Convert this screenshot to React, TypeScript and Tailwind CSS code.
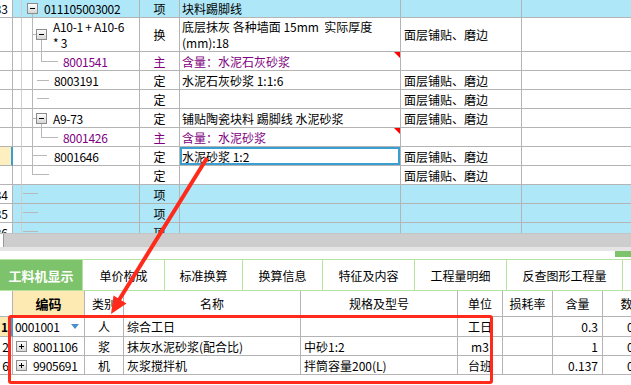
import React from 'react';

type TopRow = {
  h: number;
  num?: string;
  blue?: boolean;
  box?: boolean;
  pl?: number;
  code?: string[];
  purple?: boolean;
  type?: string;
  name?: string[];
  feat?: string;
  tri?: boolean;
  selected?: boolean;
};

const topRows: TopRow[] = [
  { h: 18, num: '33', blue: true, box: true, pl: 5, code: ['011105003002'], type: '项', name: ['块料踢脚线'] },
  { h: 34, box: true, pl: 14, code: ['A10-1 + A10-6', '* 3'], type: '换', name: ['底层抹灰 各种墙面 15mm  实际厚度', '(mm):18'], feat: '面层铺贴、磨边' },
  { h: 19, pl: 41, code: ['8001541'], purple: true, type: '主', name: ['含量：水泥石灰砂浆'], tri: true },
  { h: 19, pl: 32, code: ['8003191'], type: '定', name: ['水泥石灰砂浆 1:1:6'], feat: '面层铺贴、磨边' },
  { h: 19, type: '定', feat: '面层铺贴、磨边' },
  { h: 19, box: true, pl: 14, code: ['A9-73'], type: '定', name: ['铺贴陶瓷块料 踢脚线 水泥砂浆'], feat: '面层铺贴、磨边' },
  { h: 19, pl: 41, code: ['8001426'], purple: true, type: '主', name: ['含量：水泥砂浆'], tri: true },
  { h: 19, pl: 32, code: ['8001646'], type: '定', name: ['水泥砂浆 1:2'], feat: '面层铺贴、磨边', selected: true },
  { h: 19, type: '定', feat: '面层铺贴、磨边' },
  { h: 19, num: '34', blue: true, type: '项' },
  { h: 19, num: '35', blue: true, type: '项' },
  { h: 19, num: '36', blue: true, type: '项' },
];

const tabs = [
  { label: '工料机显示', w: 83, active: true },
  { label: '单价构成', w: 82 },
  { label: '标准换算', w: 78 },
  { label: '换算信息', w: 80 },
  { label: '特征及内容', w: 92 },
  { label: '工程量明细', w: 92 },
  { label: '反查图形工程量', w: 116 },
];

const lowRows = [
  { num: '1', h: 20, code: '0001001', type: '人', name: '综合工日', spec: '', unit: '工日', qty: '0.3', first: true },
  { num: '2', h: 19, code: '8001106', type: '浆', name: '抹灰水泥砂浆(配合比)', spec: '中砂1:2', unit: 'm3', qty: '1' },
  { num: '6', h: 19, code: '9905691', type: '机', name: '灰浆搅拌机', spec: '拌筒容量200(L)', unit: '台班', qty: '0.137' },
];

const TreeBox = ({ plus }: { plus?: boolean }) => (
  <svg width="11" height="11" viewBox="0 0 11 11" className="shrink-0">
    <defs>
      <linearGradient id="tb" x1="0" y1="0" x2="0" y2="1">
        <stop offset="0" stopColor="#ffffff" />
        <stop offset="1" stopColor="#d4d4d4" />
      </linearGradient>
    </defs>
    <rect x="0.5" y="0.5" width="10" height="10" fill="url(#tb)" stroke="#8c8c8c" />
    <line x1="3" y1="5.5" x2="8" y2="5.5" stroke="#000" />
    {plus && <line x1="5.5" y1="3" x2="5.5" y2="8" stroke="#000" />}
  </svg>
);

const line = 'border-r border-b border-[#b4b4b4]';

export default function App() {
  return (
    <div className="relative w-[631px] h-[385px] overflow-hidden bg-white text-[12px] leading-[15px] text-black font-['Noto_Sans_CJK_SC',sans-serif]">
      {/* upper grid */}
      <div className="relative h-[233px] overflow-hidden">
        {topRows.map((r, i) => {
          const bg = r.blue ? 'bg-[#aee8f8]' : 'bg-white';
          const color = r.purple ? 'text-[#800080]' : 'text-black';
          const multi = (r.name?.length ?? 0) > 1;
          return (
            <div key={i} className="grid grid-cols-[13px_9px_118px_40px_221px_121px_1fr]" style={{ height: r.h }}>
              <div
                className={`flex items-center justify-end overflow-hidden whitespace-nowrap pr-[4px] ${line} ${
                  r.selected ? 'bg-[#fdefc0] border-r-2 border-r-[#3a9fd0]' : 'bg-white'
                }`}
              >
                {r.num}
              </div>
              <div className={`border-r border-b border-r-[#cfcfcf] border-b-[#b4b4b4] ${bg}`} />
              <div className={`flex items-center gap-[6px] ${line} ${bg} ${color}`} style={{ paddingLeft: r.pl ?? 0 }}>
                {r.box && <TreeBox />}
                <span className={`whitespace-pre tracking-[-0.3px] ${multi ? 'leading-[16px]' : ''}`}>
                  {r.code?.map((c, j) => (
                    <span key={j} className="block">
                      {c}
                    </span>
                  ))}
                </span>
              </div>
              <div className={`flex items-center justify-center ${line} ${bg} ${color}`}>{r.type}</div>
              <div
                className={`relative flex items-center pl-[2px] whitespace-pre ${line} ${bg} ${color} ${
                  r.selected ? 'ring-2 ring-inset ring-[#3a9fd0]' : ''
                }`}
              >
                <div className={multi ? 'leading-[16px]' : ''}>
                  {r.name?.map((n, j) => (
                    <div key={j}>{n}</div>
                  ))}
                </div>
                {r.tri && (
                  <span className="absolute right-0 top-0 w-0 h-0 border-t-[6px] border-l-[6px] border-t-[#ff0000] border-l-transparent" />
                )}
              </div>
              <div className={`flex items-center pl-[3px] whitespace-nowrap ${line} ${bg}`}>{r.feat}</div>
              <div className={`border-b border-[#b4b4b4] ${bg}`} />
            </div>
          );
        })}
        {/* tree guide lines */}
        <svg className="absolute left-0 top-0 pointer-events-none" width="140" height="233">
          <g stroke="#b8b8b8" strokeWidth="1" shapeRendering="crispEdges">
            <line x1="32.5" y1="14" x2="32.5" y2="174" />
            <line x1="32" y1="34.5" x2="36" y2="34.5" />
            <line x1="41.5" y1="40" x2="41.5" y2="61.5" />
            <line x1="41" y1="61.5" x2="58" y2="61.5" />
            <line x1="37" y1="80.5" x2="49" y2="80.5" />
            <line x1="37" y1="98.5" x2="49" y2="98.5" />
            <line x1="32" y1="118.5" x2="36" y2="118.5" />
            <line x1="41.5" y1="124" x2="41.5" y2="137.5" />
            <line x1="41" y1="137.5" x2="58" y2="137.5" />
            <line x1="32" y1="155.5" x2="47" y2="155.5" />
            <line x1="32" y1="174.5" x2="49" y2="174.5" />
            <line x1="23" y1="193.5" x2="38" y2="193.5" />
            <line x1="23" y1="212.5" x2="38" y2="212.5" />
            <line x1="23" y1="231.5" x2="38" y2="231.5" />
          </g>
        </svg>
      </div>

      {/* horizontal scrollbar */}
      <div className="flex h-[14px] bg-[#cdcdcd] border-t border-[#c4c4c4]">
        <div className="w-[4px] bg-white border-r border-[#9a9a9a]" />
      </div>
      <div className="h-[4px] bg-[#e5e5e5]" />
      <div className="flex h-[8px] justify-end bg-white">
        <div className="w-[16px] h-[6px] bg-[#7dc36b]" />
      </div>

      {/* tab bar */}
      <div className="flex h-[32px] border-y border-[#b6e39e] bg-white">
        {tabs.map((t) => (
          <div
            key={t.label}
            className={`flex items-center justify-center border-r border-[#b6e39e] ${
              t.active ? 'bg-[#7dc36b] text-white font-bold text-[13px]' : 'text-black'
            }`}
            style={{ width: t.w }}
          >
            {t.label}
          </div>
        ))}
        <div className="flex-1" />
      </div>

      {/* lower grid */}
      <div className="grid grid-cols-[13px_72px_39px_177px_157px_45px_50px_50px_60px] h-[26px]">
        <div className={`${line} bg-white`} />
        <div className={`flex items-center justify-center font-bold text-[13px] bg-[#fdeab2] ${line}`}>编码</div>
        <div className={`flex items-center justify-center ${line}`}>类别</div>
        <div className={`flex items-center justify-center ${line}`}>名称</div>
        <div className={`flex items-center justify-center ${line}`}>规格及型号</div>
        <div className={`flex items-center justify-center ${line}`}>单位</div>
        <div className={`flex items-center justify-center ${line}`}>损耗率</div>
        <div className={`flex items-center justify-center ${line}`}>含量</div>
        <div className={`flex items-center justify-center ${line}`}>数量</div>
      </div>
      {lowRows.map((r) => (
        <div key={r.num} className="grid grid-cols-[13px_72px_39px_177px_157px_45px_50px_50px_60px]" style={{ height: r.h }}>
          <div
            className={`flex items-center justify-end pr-[3px] ${line} ${
              r.first ? 'bg-[#fdeab2] font-bold border-r-2 border-r-[#3a9fd0]' : 'bg-white'
            }`}
          >
            {r.num}
          </div>
          <div className={`flex items-center ${line} ${r.first ? 'pl-[2px] pr-[5px]' : 'pl-[3px] gap-[6px]'}`}>
            {!r.first && <TreeBox plus />}
            <span className="tracking-[-0.3px]">{r.code}</span>
            {r.first && (
              <span className="ml-auto w-0 h-0 border-x-[4px] border-t-[5px] border-x-transparent border-t-[#4a8fc8]" />
            )}
          </div>
          <div className={`flex items-center justify-center ${line}`}>{r.type}</div>
          <div className={`flex items-center pl-[3px] whitespace-nowrap ${line}`}>{r.name}</div>
          <div className={`flex items-center pl-[3px] whitespace-nowrap ${line}`}>{r.spec}</div>
          <div className={`flex items-center justify-center ${line}`}>{r.unit}</div>
          <div className={line} />
          <div className={`flex items-center justify-end pr-[4px] ${line}`}>{r.qty}</div>
          <div className={`flex items-center pl-[24px] overflow-hidden whitespace-nowrap ${line}`}>0.05</div>
        </div>
      ))}

      {/* red annotation box */}
      <div className="absolute left-[8px] top-[315px] w-[485px] h-[69px] border-[3px] border-[#ff2a1a] rounded-[3px] pointer-events-none" />

      {/* red arrow */}
      <svg className="absolute left-0 top-0 pointer-events-none" width="631" height="385">
        <line x1="207" y1="158" x2="119" y2="300" stroke="#ff2a1a" strokeWidth="4" />
        <polygon points="111,314 126.5,303.5 113.5,295.5" fill="#ff2a1a" />
      </svg>
    </div>
  );
}
